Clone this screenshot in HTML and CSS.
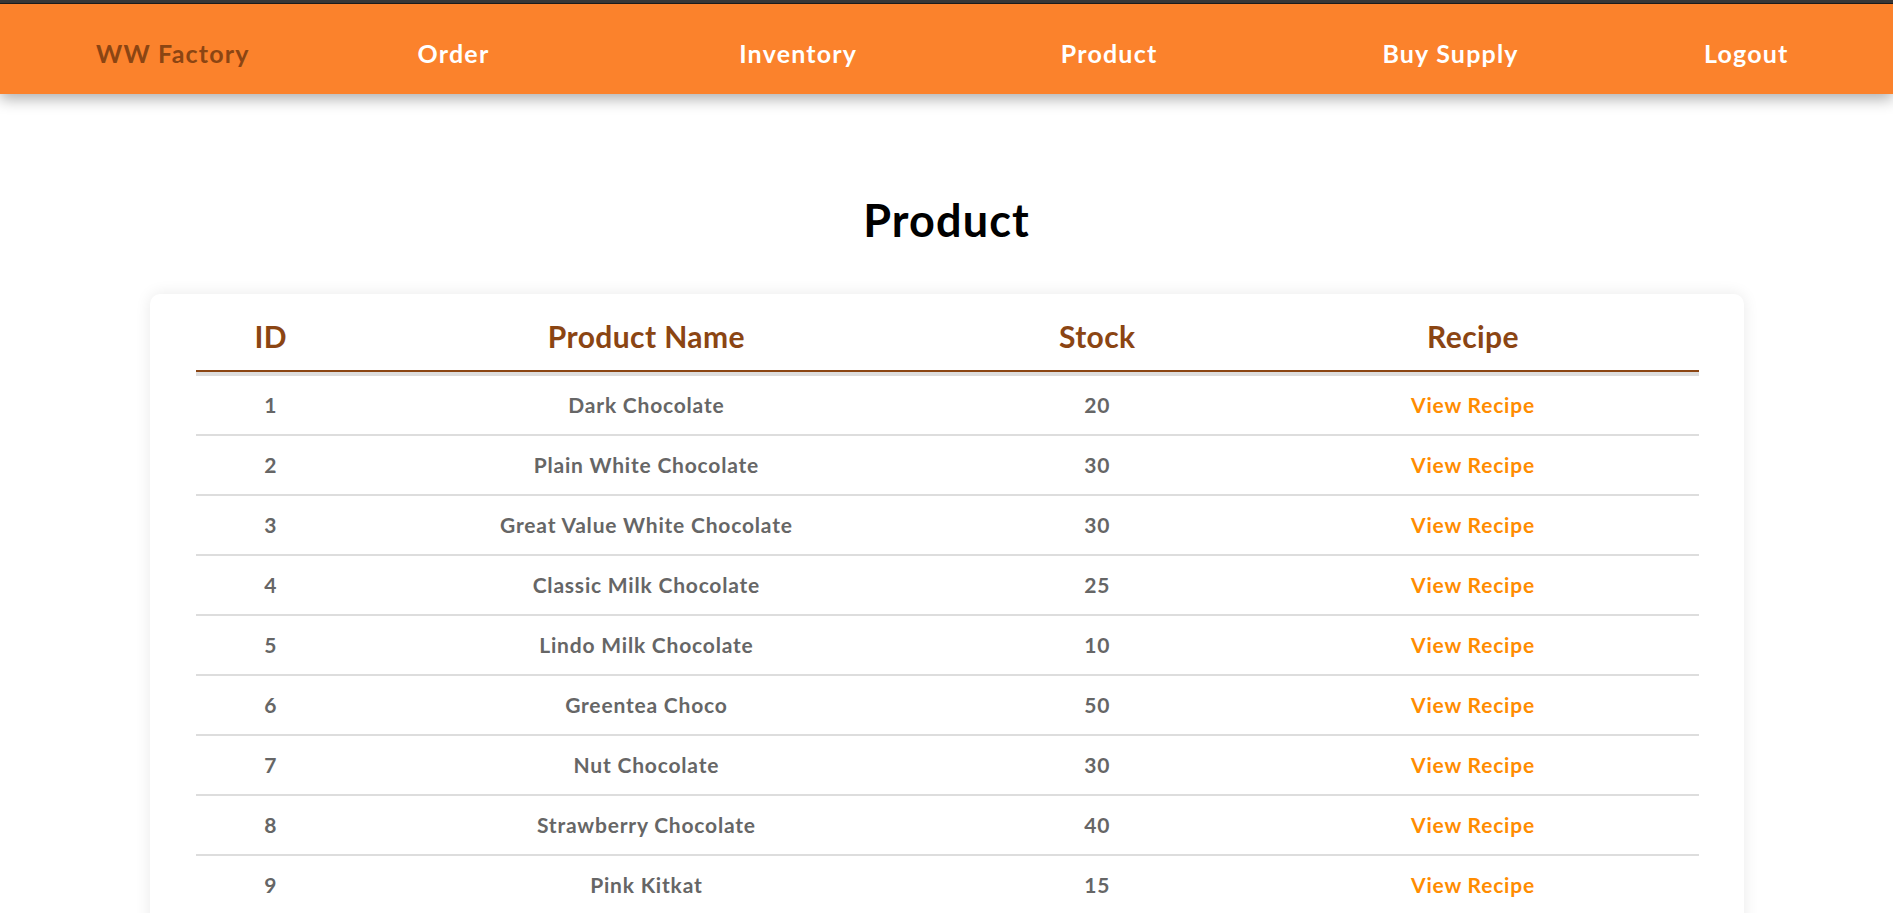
FILE: index.html
```html
<!DOCTYPE html>
<html lang="en">
<head>
<meta charset="utf-8">
<title>Product - WW Factory</title>
<link rel="stylesheet" href="styles.css">
</head>
<body>
<div class="topstrip"></div>
<nav class="navbar">
  <a class="nav-item brand" href="#">WW Factory</a>
  <a class="nav-item" href="#">Order</a>
  <a class="nav-item" href="#">Inventory</a>
  <a class="nav-item" href="#">Product</a>
  <a class="nav-item" href="#">Buy Supply</a>
  <a class="nav-item" href="#">Logout</a>
</nav>
<main class="content">
  <h1 class="page-title">Product</h1>
  <section class="card">
    <table class="product-table">
      <thead>
        <tr>
          <th class="col-id">ID</th>
          <th class="col-name">Product Name</th>
          <th class="col-stock">Stock</th>
          <th class="col-recipe">Recipe</th>
        </tr>
      </thead>
      <tbody>
        <tr><td>1</td><td>Dark Chocolate</td><td>20</td><td><a class="recipe-link" href="#">View Recipe</a></td></tr>
        <tr><td>2</td><td>Plain White Chocolate</td><td>30</td><td><a class="recipe-link" href="#">View Recipe</a></td></tr>
        <tr><td>3</td><td>Great Value White Chocolate</td><td>30</td><td><a class="recipe-link" href="#">View Recipe</a></td></tr>
        <tr><td>4</td><td>Classic Milk Chocolate</td><td>25</td><td><a class="recipe-link" href="#">View Recipe</a></td></tr>
        <tr><td>5</td><td>Lindo Milk Chocolate</td><td>10</td><td><a class="recipe-link" href="#">View Recipe</a></td></tr>
        <tr><td>6</td><td>Greentea Choco</td><td>50</td><td><a class="recipe-link" href="#">View Recipe</a></td></tr>
        <tr><td>7</td><td>Nut Chocolate</td><td>30</td><td><a class="recipe-link" href="#">View Recipe</a></td></tr>
        <tr><td>8</td><td>Strawberry Chocolate</td><td>40</td><td><a class="recipe-link" href="#">View Recipe</a></td></tr>
        <tr><td>9</td><td>Pink Kitkat</td><td>15</td><td><a class="recipe-link" href="#">View Recipe</a></td></tr>
      </tbody>
    </table>
  </section>
</main>
</body>
</html>
```
FILE: styles.css
```css
html, body {
  margin: 0;
  padding: 0;
  background: #ffffff;
  font-family: "Lato", "Liberation Sans", sans-serif;
  font-weight: 700;
}

.topstrip {
  height: 4px;
  background: #3a3a3a;
  border-bottom: 1px solid #1e1e1e;
  box-sizing: border-box;
}

.navbar {
  height: 90px;
  box-sizing: border-box;
  padding: 7px 0 0 96px;
  background: #fb822c;
  display: grid;
  grid-template-columns: repeat(5, 321.6px) auto;
  align-items: center;
  box-shadow: 0 5px 14px rgba(0, 0, 0, 0.32);
  position: relative;
  z-index: 2;
}

.nav-item {
  font-size: 25px;
  line-height: 1.2;
  letter-spacing: 1.2px;
  color: #ffffff;
  text-decoration: none;
  justify-self: start;
}

.nav-item.brand {
  color: #8b4513;
}

.content {
  padding-top: 99px;
}

.page-title {
  margin: 0 0 47px;
  text-align: center;
  font-size: 45px;
  line-height: 1.2;
  letter-spacing: 1.1px;
  font-weight: 700;
  color: #000000;
}

.card {
  width: 1594px;
  box-sizing: border-box;
  margin: 0 auto;
  padding: 8px 45px 20px 46px;
  background: #ffffff;
  border-radius: 10px;
  box-shadow: 0 0 16px rgba(0, 0, 0, 0.09);
}

.product-table {
  width: 100%;
  border-collapse: separate;
  border-spacing: 0;
  table-layout: fixed;
}

.col-id { width: 10%; }
.col-name { width: 40%; }
.col-stock { width: 20%; }
.col-recipe { width: 30%; }

.product-table th {
  padding: 16px 0;
  font-size: 30px;
  line-height: 1.2;
  letter-spacing: 0.4px;
  color: #8b4513;
  text-align: center;
  border-bottom: 2px solid #8b4513;
}

.product-table td {
  padding: 16px 0;
  font-size: 21px;
  line-height: 26px;
  letter-spacing: 0.8px;
  color: #666666;
  text-align: center;
  border-bottom: 2px solid #dddddd;
}

.product-table tbody tr:first-child td {
  border-top: 4px solid #dddddd;
}

.recipe-link {
  color: #ff8c00;
  text-decoration: none;
}
```
